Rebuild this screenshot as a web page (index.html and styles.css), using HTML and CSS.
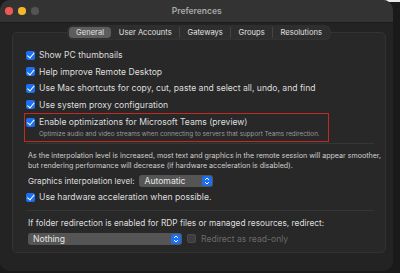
FILE: index.html
```html
<!DOCTYPE html>
<html>
<head>
<meta charset="utf-8">
<link rel="stylesheet" href="styles.css">
</head>
<body>
<div class="window">
  <div class="titlebar">
    <div class="lights">
      <span class="light red"></span>
      <span class="light yellow"></span>
      <span class="light gray"></span>
    </div>
    <div class="title">Preferences</div>
  </div>
  <div class="content">
    <div class="tabs">
      <span class="tab active">General</span>
      <span class="tab">User Accounts</span>
      <span class="tab">Gateways</span>
      <span class="tab">Groups</span>
      <span class="tab last">Resolutions</span>
    </div>
    <div class="panel">
      <div class="check-row"><span class="cb on"></span><span>Show PC thumbnails</span></div>
      <div class="check-row"><span class="cb on"></span><span>Help improve Remote Desktop</span></div>
      <div class="check-row"><span class="cb on"></span><span>Use Mac shortcuts for copy, cut, paste and select all, undo, and find</span></div>
      <div class="check-row"><span class="cb on"></span><span>Use system proxy configuration</span></div>
      <div class="highlight">
        <div class="check-row"><span class="cb on"></span><span>Enable optimizations for Microsoft Teams (preview)</span></div>
        <div class="sub">Optimize audio and video streams when connecting to servers that support Teams redirection.</div>
      </div>
      <div class="sep"></div>
      <p class="note">As the interpolation level is increased, most text and graphics in the remote session will appear smoother,<br>but rendering performance will decrease (if hardware acceleration is disabled).</p>
      <div class="interp">
        <span class="ilabel">Graphics interpolation level:</span>
        <span class="popup small"><span class="pval">Automatic</span><span class="stepper"><svg width="6" height="8" viewBox="0 0 6 8"><path d="M1 3 L3 1 L5 3 M1 5 L3 7 L5 5" fill="none" stroke="#fff" stroke-width="1"/></svg></span></span>
      </div>
      <div class="check-row hw"><span class="cb on"></span><span>Use hardware acceleration when possible.</span></div>
      <div class="sep sep2"></div>
      <div class="label">If folder redirection is enabled for RDP files or managed resources, redirect:</div>
      <div class="redir">
        <span class="popup wide"><span class="pval">Nothing</span><span class="stepper"><svg width="6" height="8" viewBox="0 0 6 8"><path d="M1 3 L3 1 L5 3 M1 5 L3 7 L5 5" fill="none" stroke="#fff" stroke-width="1"/></svg></span></span>
        <span class="cb off"></span>
        <span class="disabled">Redirect as read-only</span>
      </div>
    </div>
  </div>
</div>
</body>
</html>
```
FILE: styles.css
```css
html, body {
  margin: 0;
  padding: 0;
}
body {
  width: 400px;
  height: 273px;
  overflow: hidden;
  background: linear-gradient(#1a1a1a, #1a1a1a) 0 2px / 100% 100% no-repeat,
              linear-gradient(to right, #1a1a1a 255px, #e9e9e9 255px);
  font-family: Inter, "Liberation Sans", sans-serif;
  color: #dedede;
}
.window {
  width: 393px;
  height: 271px;
  background: #232323;
  border-radius: 10px;
  overflow: hidden;
}
.titlebar {
  height: 22px;
  background: #333333;
  display: flex;
  align-items: center;
  border-bottom: 1px solid #1c1c1c;
}
.lights {
  display: flex;
  gap: 5.5px;
  padding-left: 5px;
}
.light {
  width: 7.5px;
  height: 7.5px;
  border-radius: 50%;
}
.red { background: #ee5a52; }
.yellow { background: #f3b72c; }
.gray { background: #545454; }
.title {
  flex: 1;
  text-align: center;
  font-size: 8.5px;
  font-weight: 600;
  color: #a9a9a9;
  margin-right: 38px;
}
.content {
  padding: 3px 7px 0 12px;
}
.tabs {
  display: flex;
  align-items: center;
  width: max-content;
  margin: 0 auto;
  background: #2e2e2e;
  border-radius: 5px;
  height: 13px;
  padding: 0 1px;
  position: relative;
  z-index: 1;
  font-size: 7.6px;
  color: #e0e0e0;
  box-shadow: 0 0 0 0.5px #3c3c3c;
}
.tab {
  padding: 0 7.4px;
  height: 11px;
  line-height: 11px;
  border-right: 1px solid #444;
}
.tab.active {
  background: #5d5d5d;
  border-radius: 4px;
  border-right: none;
}
.tab.last { border-right: none; }
.panel {
  margin-top: -7px;
  height: 221px;
  background: #282828;
  border: 1px solid #333;
  border-radius: 5px;
  padding: 14px 0 0 13px;
  box-sizing: border-box;
  font-size: 8.6px;
}
.check-row {
  display: flex;
  align-items: center;
  height: 16.5px;
  gap: 4px;
  white-space: nowrap;
}
.cb {
  width: 9px;
  height: 9px;
  border-radius: 2px;
  flex: none;
  position: relative;
}
.cb.on {
  background: #1b6ff0;
}
.cb.on::after {
  content: "";
  position: absolute;
  left: 3px;
  top: 0.5px;
  width: 2.5px;
  height: 5.5px;
  border: solid #fff;
  border-width: 0 1.3px 1.3px 0;
  transform: rotate(40deg);
}
.cb.off {
  background: #3d3d3d;
  border: 0.5px solid #4a4a4a;
  box-sizing: border-box;
}
.highlight {
  margin-left: -2px;
  width: 305px;
  height: 29px;
  border: 1px solid #c42a1f;
  box-sizing: border-box;
  padding-left: 1px;
}
.highlight .check-row {
  height: 16px;
}
.sub {
  font-size: 6.3px;
  color: #9a9a9a;
  padding-left: 13px;
  line-height: 8px;
  white-space: nowrap;
}
.sep {
  height: 1px;
  background: #353535;
  width: 348px;
  margin-top: 1px;
}
.note {
  margin: 7px 0 0 2px;
  font-size: 7.1px;
  line-height: 9.5px;
  color: #d0d0d0;
  white-space: nowrap;
}
.interp {
  display: flex;
  align-items: center;
  gap: 5px;
  margin: 3px 0 0 2px;
  height: 15px;
}
.ilabel {
  font-size: 8.1px;
}
.popup {
  display: flex;
  align-items: center;
  justify-content: space-between;
  background: #555;
  border-radius: 3px;
  height: 12px;
  box-sizing: border-box;
  padding: 0 1px 0 5px;
  color: #e6e6e6;
}
.popup.small { width: 74px; }
.popup.wide { width: 154px; }
.stepper {
  width: 10px;
  height: 10px;
  background: #1b6ff0;
  border-radius: 2.5px;
  display: flex;
  align-items: center;
  justify-content: center;
}
.hw {
  margin-top: 1px;
}
.sep2 {
  margin-top: 4px;
}
.label {
  margin: 7px 0 0 2px;
  font-size: 8.3px;
  height: 12px;
  white-space: nowrap;
}
.redir {
  display: flex;
  align-items: center;
  margin: 3px 0 0 2px;
  gap: 5px;
}
.disabled {
  color: #6a6a6a;
}
```
